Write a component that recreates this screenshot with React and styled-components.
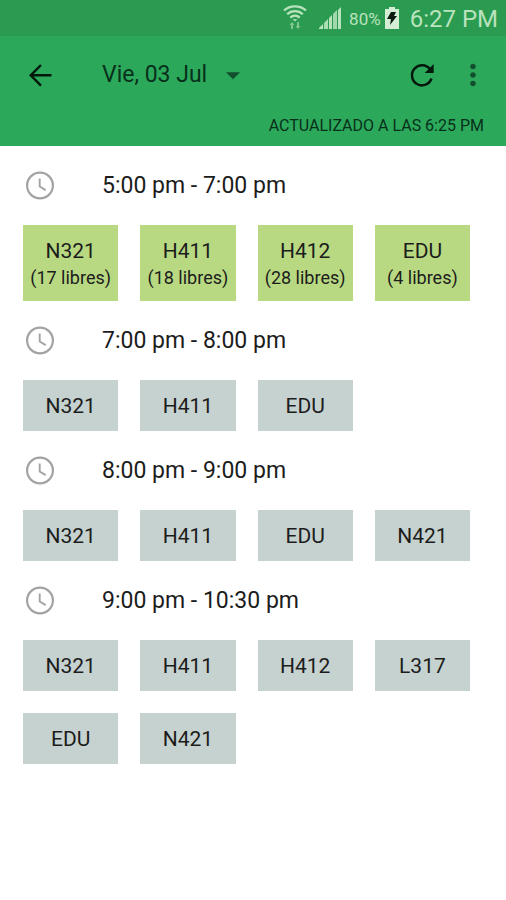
import { useState } from 'react';
import styled, { createGlobalStyle } from 'styled-components';
import { MdArrowDropDown, MdMoreVert } from 'react-icons/md';

const GlobalStyle = createGlobalStyle`
  * {
    box-sizing: border-box;
  }

  body {
    margin: 0;
    background: #ffffff;
    color: #1c1c1c;
    font-family: Roboto, "Liberation Sans", sans-serif;
  }

  button,
  select {
    margin: 0;
    padding: 0;
    border: 0;
    background: none;
    color: inherit;
    font: inherit;
    cursor: pointer;
  }
`;

const StatusBar = styled.div`
  display: flex;
  justify-content: flex-end;
  align-items: center;
  height: 36px;
  padding: 0 8px;
  background: #2b9b51;
  color: #b9e3bd;

  & .wifi {
    margin-right: 12px;
  }

  & .signal {
    margin-right: 7px;
  }

  & .battery {
    margin-left: 4px;
    margin-right: 11px;
  }
`;

const BatteryLevel = styled.span`
  font-size: 17px;
  padding-top: 2px;
`;

const Clock = styled.time`
  font-size: 24px;
  padding-top: 2px;
`;

const Header = styled.header`
  height: 110px;
  background: #2ca85b;
  color: #07301a;
`;

const Toolbar = styled.div`
  display: flex;
  align-items: center;
  height: 78px;
  padding: 0 16px 0 23px;
`;

const IconButton = styled.button`
  display: flex;
  color: ${({$muted}) => $muted ? '#12502d' : '#04190c'};
`;

const DatePicker = styled.label`
  display: flex;
  align-items: center;
  margin-left: 45px;
  margin-right: auto;
  color: #12502d;

  & select {
    appearance: none;
    color: #07301a;
    font-size: 23px;
    line-height: 32px;
  }

  & svg {
    margin-left: 8px;
    pointer-events: none;
  }
`;

const Actions = styled.div`
  display: flex;
  align-items: center;
  gap: 17px;
`;

const Updated = styled.p`
  margin: 0;
  padding-right: 22px;
  font-size: 16px;
  line-height: 24px;
  text-align: right;
  text-transform: uppercase;
`;

const SlotHeading = styled.h2`
  display: flex;
  align-items: center;
  height: 79px;
  margin: 0;
  padding-left: 23px;
  font-size: 23px;
  font-weight: 400;

  & svg {
    margin-right: 45px;
    color: #a3a3a3;
  }
`;

const RoomGrid = styled.div`
  display: grid;
  grid-template-columns: repeat(4, 1fr);
  gap: 22px;
  padding: 0 36px 0 23px;
`;

const Room = styled.button`
  padding: 13px 0 11px;
  background: ${({$available}) => $available ? '#b8d982' : '#c6d2cf'};
  font-size: 21px;
  line-height: 27px;
  white-space: nowrap;

  & small {
    display: block;
    font-size: 18px;
    line-height: 25px;
  }
`;

const slots = [
  {
    time: '5:00 pm - 7:00 pm',
    rooms: [
      { name: 'N321', free: 17 },
      { name: 'H411', free: 18 },
      { name: 'H412', free: 28 },
      { name: 'EDU', free: 4 },
    ],
  },
  {
    time: '7:00 pm - 8:00 pm',
    rooms: [{ name: 'N321' }, { name: 'H411' }, { name: 'EDU' }],
  },
  {
    time: '8:00 pm - 9:00 pm',
    rooms: [{ name: 'N321' }, { name: 'H411' }, { name: 'EDU' }, { name: 'N421' }],
  },
  {
    time: '9:00 pm - 10:30 pm',
    rooms: [
      { name: 'N321' },
      { name: 'H411' },
      { name: 'H412' },
      { name: 'L317' },
      { name: 'EDU' },
      { name: 'N421' },
    ],
  },
];

function WifiIcon() {
  return (
    <svg className="wifi" width="24" height="26" viewBox="0 0 24 26" fill="none" stroke="currentColor" strokeWidth="2.2">
      <path d="M1 5.500C7 0 17 0 23 5.500" />
      <path d="M4.200 9.200C8.500 5 15.500 5 19.800 9.200" />
      <path d="M7.300 12.600C10 10 14 10 16.700 12.600" />
      <path d="M9.600 14.200h4.800L12 16.600z" fill="currentColor" stroke="none" />
      <path d="M6.500 20l2.500-3 2.500 3H10v4H8v-4zM12.500 21H14v-4h2v4h1.500L15 24z" fill="currentColor" stroke="none" opacity="0.600" />
    </svg>
  );
}

function SignalIcon() {
  return (
    <svg className="signal" width="23" height="23" viewBox="0 0 23 23" fill="currentColor">
      <path d="M0 22v-1l4-4v5z" />
      <path d="M5 22v-6l4-4v10z" opacity="0.900" />
      <path d="M10 22V11l3-3v14z" />
      <path d="M14 22V7l4-4v19z" opacity="0.850" />
      <path d="M19 22V3l3-3v22z" />
    </svg>
  );
}

function BatteryIcon() {
  return (
    <svg className="battery" width="14" height="22" viewBox="0 0 14 22">
      <path d="M4 0h6v2h4v20H0V2h4z" fill="#d3eed4" />
      <path d="M6 5h5l-2 4h3l-7 9 1-6H2z" fill="#0b1a10" />
    </svg>
  );
}

function BackIcon() {
  return (
    <svg width="34" height="34" viewBox="0 0 34 34" fill="none" stroke="currentColor" strokeWidth="2.400">
      <path d="M28.500 17.300H7.500M18 7L7.700 17.300 18 27.600" />
    </svg>
  );
}

function RefreshIcon() {
  return (
    <svg width="34" height="34" viewBox="0 0 34 34" fill="none" stroke="currentColor" strokeWidth="2.500">
      <path d="M26.500 20.500A10 10 0 1 1 25 11.300" />
      <path d="M28.700 6v9h-9z" fill="currentColor" stroke="none" />
    </svg>
  );
}

function ClockIcon() {
  return (
    <svg width="34" height="34" viewBox="0 0 34 34" fill="none" stroke="currentColor" strokeWidth="2.200">
      <circle cx="17" cy="16.500" r="12.900" />
      <path d="M16.700 9.500v8l6 3.600" strokeWidth="1.900" />
    </svg>
  );
}

export default function App() {
  const [date, setDate] = useState('Vie, 03 Jul');

  return (
    <>
      <GlobalStyle />
      <StatusBar>
        <WifiIcon />
        <SignalIcon />
        <BatteryLevel>80%</BatteryLevel>
        <BatteryIcon />
        <Clock>6:27 PM</Clock>
      </StatusBar>

      <Header>
        <Toolbar>
          <IconButton aria-label="Volver">
            <BackIcon />
          </IconButton>
          <DatePicker>
            <select aria-label="Fecha" value={date} onChange={(e) => setDate(e.target.value)}>
              <option>Vie, 03 Jul</option>
            </select>
            <MdArrowDropDown size={34} />
          </DatePicker>
          <Actions>
            <IconButton aria-label="Actualizar">
              <RefreshIcon />
            </IconButton>
            <IconButton $muted aria-label="Más opciones">
              <MdMoreVert size={34} />
            </IconButton>
          </Actions>
        </Toolbar>
        <Updated>Actualizado a las 6:25 PM</Updated>
      </Header>

      <main>
        {slots.map(({time, rooms}) => (
          <section key={time}>
            <SlotHeading>
              <ClockIcon />
              {time}
            </SlotHeading>
            <RoomGrid>
              {rooms.map(({name, free}) => (
                <Room key={name} $available={free > 0}>
                  {name}
                  {free && <small>({free} libres)</small>}
                </Room>
              ))}
            </RoomGrid>
          </section>
        ))}
      </main>
    </>
  );
}
